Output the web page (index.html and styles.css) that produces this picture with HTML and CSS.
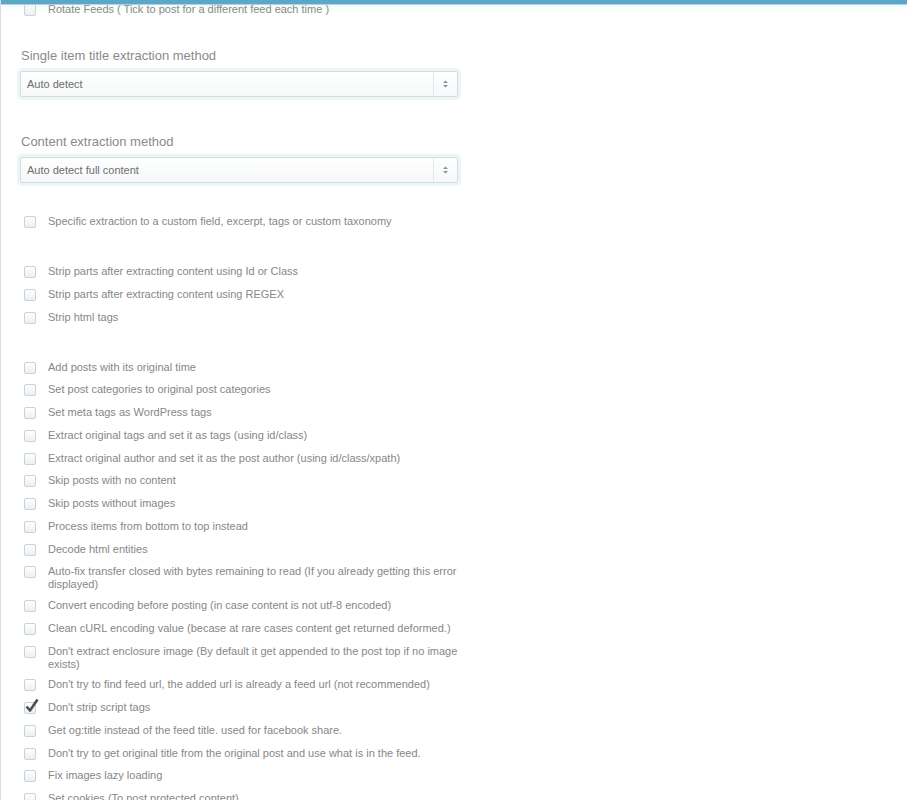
FILE: index.html
```html
<!DOCTYPE html>
<html>
<head>
<meta charset="utf-8">
<link rel="stylesheet" href="styles.css">
</head>
<body>
<div class="topbar"></div>
<div class="page">
  <div class="form">
    <div class="row first"><span class="cb"></span><span class="txt">Rotate Feeds ( Tick to post for a different feed each time )</span></div>

    <div class="field f1">
      <div class="label">Single item title extraction method</div>
      <div class="select"><span class="val">Auto detect</span><span class="arrows"><svg width="7" height="10" viewBox="0 0 7 10"><path d="M1 4 L3.5 1.5 L6 4 Z M1 6 L3.5 8.5 L6 6 Z" fill="#8a9196"/></svg></span></div>
    </div>

    <div class="field f2">
      <div class="label">Content extraction method</div>
      <div class="select"><span class="val">Auto detect full content</span><span class="arrows"><svg width="7" height="10" viewBox="0 0 7 10"><path d="M1 4 L3.5 1.5 L6 4 Z M1 6 L3.5 8.5 L6 6 Z" fill="#8a9196"/></svg></span></div>
    </div>

    <div class="group g1">
      <div class="row"><span class="cb"></span><span class="txt">Specific extraction to a custom field, excerpt, tags or custom taxonomy</span></div>
    </div>

    <div class="group">
      <div class="row"><span class="cb"></span><span class="txt">Strip parts after extracting content using Id or Class</span></div>
      <div class="row"><span class="cb"></span><span class="txt">Strip parts after extracting content using REGEX</span></div>
      <div class="row"><span class="cb"></span><span class="txt">Strip html tags</span></div>
    </div>

    <div class="group">
      <div class="row"><span class="cb"></span><span class="txt">Add posts with its original time</span></div>
      <div class="row"><span class="cb"></span><span class="txt">Set post categories to original post categories</span></div>
      <div class="row"><span class="cb"></span><span class="txt">Set meta tags as WordPress tags</span></div>
      <div class="row"><span class="cb"></span><span class="txt">Extract original tags and set it as tags (using id/class)</span></div>
      <div class="row"><span class="cb"></span><span class="txt">Extract original author and set it as the post author (using id/class/xpath)</span></div>
      <div class="row"><span class="cb"></span><span class="txt">Skip posts with no content</span></div>
      <div class="row"><span class="cb"></span><span class="txt">Skip posts without images</span></div>
      <div class="row"><span class="cb"></span><span class="txt">Process items from bottom to top instead</span></div>
      <div class="row"><span class="cb"></span><span class="txt">Decode html entities</span></div>
      <div class="row"><span class="cb"></span><span class="txt">Auto-fix transfer closed with bytes remaining to read (If you already getting this error displayed)</span></div>
      <div class="row"><span class="cb"></span><span class="txt">Convert encoding before posting (in case content is not utf-8 encoded)</span></div>
      <div class="row"><span class="cb"></span><span class="txt">Clean cURL encoding value (becase at rare cases content get returned deformed.)</span></div>
      <div class="row"><span class="cb"></span><span class="txt">Don't extract enclosure image (By default it get appended to the post top if no image exists)</span></div>
      <div class="row"><span class="cb"></span><span class="txt">Don't try to find feed url, the added url is already a feed url (not recommended)</span></div>
      <div class="row"><span class="cb checked"><svg class="tick" width="16" height="16" viewBox="0 0 16 16"><path d="M2.5 8.5 L6 12.5 L13.5 1.5" fill="none" stroke="#4a4f54" stroke-width="2.6" stroke-linejoin="round"/></svg></span><span class="txt">Don't strip script tags</span></div>
      <div class="row"><span class="cb"></span><span class="txt">Get og:title instead of the feed title. used for facebook share.</span></div>
      <div class="row"><span class="cb"></span><span class="txt">Don't try to get original title from the original post and use what is in the feed.</span></div>
      <div class="row"><span class="cb"></span><span class="txt">Fix images lazy loading</span></div>
      <div class="row"><span class="cb"></span><span class="txt">Set cookies (To post protected content)</span></div>
    </div>
  </div>
</div>
</body>
</html>
```

FILE: styles.css
```css
html, body {
  margin: 0;
  padding: 0;
  background: #fff;
  height: 800px;
  overflow: hidden;
}
body {
  font-family: "Liberation Sans", Arial, sans-serif;
  color: #888;
  border-left: 1px solid #dcdcdc;
  position: relative;
}
.topbar {
  position: absolute;
  top: 0;
  left: -1px;
  right: 0;
  height: 4px;
  background: #5ba7c7;
  box-shadow: 0 1px 0 #a9d6e2, 0 2px 6px rgba(150, 210, 220, 0.25);
  z-index: 2;
}
.page {
  padding: 3px 0 0 19px;
}
.form {
  width: 438px;
}
.row {
  display: flex;
  align-items: flex-start;
  min-height: 15px;
  margin-bottom: 7.75px;
  padding-left: 4px;
  font-size: 11px;
  line-height: 13px;
}
.row.first {
  margin-bottom: 0;
}
.cb {
  position: relative;
  flex: none;
  width: 10px;
  height: 10px;
  margin-top: 1px;
  border: 1px solid #c9d2d8;
  border-radius: 2px;
  background: linear-gradient(#ffffff, #eaf0f3);
  margin-right: 12px;
}
.cb .tick {
  position: absolute;
  left: -1px;
  top: -5px;
}
.txt {
  color: #878787;
  flex: 1;
}
.field.f1 {
  margin-top: 29px;
}
.field.f2 {
  margin-top: 36px;
}
.label {
  font-size: 13px;
  line-height: 18px;
  color: #8a8a8a;
  padding-left: 1px;
  margin-bottom: 6px;
}
.select {
  display: flex;
  align-items: stretch;
  height: 24px;
  border: 1px solid #d3dde1;
  border-radius: 2px;
  background: linear-gradient(#ffffff, #f6f8f9);
  box-shadow: 0 0 0 3px #eef5f7, 0 1px 3px rgba(0,0,0,0.06);
}
.val {
  flex: 1;
  font-size: 11px;
  line-height: 24px;
  color: #6e6e6e;
  padding-left: 6px;
}
.arrows {
  width: 23px;
  border-left: 1px solid #e2e7ea;
  display: flex;
  align-items: center;
  justify-content: center;
}
.group {
  margin-top: 35px;
}
.group.g1 {
  margin-top: 32px;
}
```
